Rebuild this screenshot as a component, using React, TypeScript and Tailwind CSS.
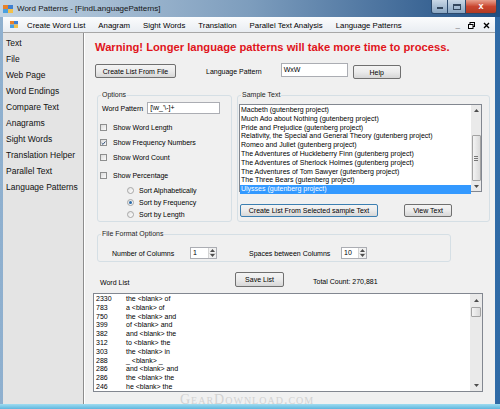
import type { ReactNode } from 'react'

const sampleTexts = [
  'Macbeth (gutenberg project)',
  'Much Ado about Nothing (gutenberg project)',
  'Pride and Prejudice (gutenberg project)',
  'Relativity, the Special and General Theory (gutenberg project)',
  'Romeo and Juliet (gutenberg project)',
  'The Adventures of Huckleberry Finn (gutenberg project)',
  'The Adventures of Sherlock Holmes (gutenberg project)',
  'The Adventures of Tom Sawyer (gutenberg project)',
  'The Three Bears (gutenberg project)',
  'Ulysses (gutenberg project)',
]

const words: [string, string][] = [
  ['2330', 'the <blank> of'],
  ['783', 'a <blank> of'],
  ['750', 'the <blank> and'],
  ['399', 'of <blank> and'],
  ['382', 'and <blank> the'],
  ['312', 'to <blank> the'],
  ['303', 'the <blank> in'],
  ['288', '_ <blank> _'],
  ['286', 'and <blank> and'],
  ['286', 'the <blank> the'],
  ['246', 'he <blank> the'],
]

const sideItems = [
  'Text',
  'File',
  'Web Page',
  'Word Endings',
  'Compare Text',
  'Anagrams',
  'Sight Words',
  'Translation Helper',
  'Parallel Text',
  'Language Patterns',
]

const menuItems = ['Create Word List', 'Anagram', 'Sight Words', 'Translation', 'Parallel Text Analysis', 'Language Patterns']

function Btn({ children, className = '' }: { children: ReactNode; className?: string }) {
  return (
    <div
      className={
        'flex items-center justify-center rounded-[2px] border bg-gradient-to-b from-[#f4f4f4] via-[#ebebeb] to-[#d7d7d7] text-[7px] leading-none text-black ' +
        className
      }
    >
      {children}
    </div>
  )
}

function Check({ label, checked = false }: { label: string; checked?: boolean }) {
  return (
    <div className="flex h-[15px] items-center">
      <div className="ml-[2px] flex h-[7px] w-[7px] items-center justify-center border border-[#8e8f8f] bg-gradient-to-br from-[#dcdcdc] to-[#fbfbfb]">
        {checked && (
          <svg width="6" height="6" viewBox="0 0 6 6">
            <path d="M0.8 3.1 L2.4 4.7 L5.3 1.2" stroke="#1d3f6e" strokeWidth="1.1" fill="none" />
          </svg>
        )}
      </div>
      <span className="ml-[6px] text-[7px] leading-none">{label}</span>
    </div>
  )
}

function Radio({ label, checked = false }: { label: string; checked?: boolean }) {
  return (
    <div className="flex h-[12px] items-center pl-[29px]">
      <div className="flex h-[7px] w-[7px] items-center justify-center rounded-full border border-[#a6a6a6] bg-gradient-to-br from-[#e2e2e2] to-[#ffffff]">
        {checked && <div className="h-[3px] w-[3px] rounded-full bg-[#2a6aa8]" />}
      </div>
      <span className="ml-[5px] text-[7px] leading-none">{label}</span>
    </div>
  )
}

function Arrow({ up }: { up?: boolean }) {
  return (
    <svg width="5" height="3" viewBox="0 0 5 3">
      <path d={up ? 'M0 3 L2.5 0 L5 3 Z' : 'M0 0 L2.5 3 L5 0 Z'} fill="#4d4d4d" />
    </svg>
  )
}

function Spinner({ value, className = '' }: { value: string; className?: string }) {
  return (
    <div className={'flex h-[12px] border border-[#abadb3] bg-white ' + className}>
      <span className="flex-1 pl-[2px] text-[7px] leading-[10px]">{value}</span>
      <div className="flex w-[8px] flex-col border-l border-[#d5d5d5] bg-[#f1f1f1]">
        <div className="flex flex-1 items-center justify-center border-b border-[#d5d5d5]">
          <Arrow up />
        </div>
        <div className="flex flex-1 items-center justify-center">
          <Arrow />
        </div>
      </div>
    </div>
  )
}

function Legend({ children }: { children: ReactNode }) {
  return <legend className="ml-[3px] px-[1px] text-[7px] leading-[10px] text-[#1e1e1e]">{children}</legend>
}

export default function App() {
  return (
    <div className="relative flex h-[409px] w-[500px] flex-col overflow-hidden bg-gradient-to-r from-[#8fb0cf] to-[#2f6aa6] font-['Liberation_Sans',Arial,sans-serif] text-black">
      {/* title bar */}
      <div className="flex h-[17px] items-center bg-gradient-to-r from-[#c2d3e2] via-[#7d9dbd] to-[#1f4f84]">
        <svg width="10" height="10" viewBox="0 0 10 10" className="ml-[3px]">
          <rect x="0" y="1" width="5" height="4" fill="#e8822a" />
          <rect x="5" y="1" width="5" height="4" fill="#3f7fd0" />
          <rect x="0" y="5" width="5" height="4" fill="#4aa0e0" />
          <rect x="5" y="5" width="5" height="4" fill="#f2c14b" />
        </svg>
        <span className="ml-[4px] text-[8px] leading-none text-[#141414]">Word Patterns - [FindLanguagePatterns]</span>
        <div className="ml-auto mr-[3px] flex h-[14px] self-start overflow-hidden rounded-b-[3px] border border-t-0 border-[#2c4a6d]">
          <div className="flex w-[16px] items-center justify-center border-r border-[#2c4a6d] bg-gradient-to-b from-[#c9d8e7] to-[#8aa6c2]">
            <div className="mt-[3px] h-[2px] w-[6px] border border-[#33475e] bg-white" />
          </div>
          <div className="flex w-[18px] items-center justify-center border-r border-[#2c4a6d] bg-gradient-to-b from-[#c9d8e7] to-[#8aa6c2]">
            <div className="h-[6px] w-[8px] border border-[#33475e] border-t-2 bg-transparent" />
          </div>
          <div className="flex w-[30px] items-center justify-center bg-gradient-to-b from-[#e7a08f] via-[#c9452f] to-[#b23a22]">
            <span className="text-[9px] font-bold leading-none text-white">x</span>
          </div>
        </div>
      </div>

      <div className="flex flex-1">
        <div className="w-[3px]" />
        <div className="flex w-[492px] flex-col">
          {/* menu bar */}
          <div className="flex h-[16px] items-center border-b border-[#a7a7a7] bg-gradient-to-b from-[#fbfcfd] to-[#e9edf2] text-[7.8px] leading-none">
            <svg width="8" height="7" viewBox="0 0 8 7" className="ml-[7px]">
              <rect x="0" y="0" width="4" height="3.5" fill="#e8822a" />
              <rect x="4" y="0" width="4" height="3.5" fill="#3f7fd0" />
              <rect x="0" y="3.5" width="4" height="3.5" fill="#4aa0e0" />
              <rect x="4" y="3.5" width="4" height="3.5" fill="#f2c14b" />
            </svg>
            <div className="ml-[9px] flex gap-[13px] pt-[2px]">
              {menuItems.map((m) => (
                <span key={m}>{m}</span>
              ))}
            </div>
            <div className="ml-auto mr-[5px] flex items-center gap-[8px] pt-[2px] text-[8px] font-bold">
              <span className="leading-none">_</span>
              <svg width="7" height="7" viewBox="0 0 7 7">
                <rect x="2" y="0.5" width="4.5" height="4" fill="none" stroke="#000" strokeWidth="1" />
                <rect x="0.5" y="2.5" width="4.5" height="4" fill="#fbfcfd" stroke="#000" strokeWidth="1" />
              </svg>
              <svg width="7" height="7" viewBox="0 0 7 7">
                <path d="M1 1 L6 6 M6 1 L1 6" stroke="#000" strokeWidth="1.4" />
              </svg>
            </div>
          </div>

          <div className="flex flex-1">
            {/* sidebar */}
            <div className="w-[81px] border-r border-[#8d8d8d] bg-[#e4e4e4] pt-[2px] text-[8.5px] leading-[16px] text-[#111]">
              {sideItems.map((s) => (
                <div key={s} className="pl-[3px]">
                  {s}
                </div>
              ))}
            </div>

            {/* main panel */}
            <div className="flex flex-1 flex-col border-l border-[#ffffff] bg-[#f0f0f0]">
              <div className="ml-[10px] mt-[8px] text-[11.2px] font-bold leading-[12px] text-[#e0141b]">
                Warning! Longer language patterns will take more time to process.
              </div>

              <div className="mt-[10px] flex items-start">
                <Btn className="ml-[10px] mt-[1px] h-[14px] w-[81px] border-[#707070]">Create List From File</Btn>
                <span className="ml-[30px] mt-[5px] text-[7px] leading-none">Language Pattern</span>
                <div className="ml-[19px] h-[14px] w-[67px] border border-[#abadb3] bg-white pl-[2px] text-[7px] leading-[12px]">WxW</div>
                <Btn className="ml-[5px] mt-[2px] h-[14px] w-[48px] border-[#707070]">Help</Btn>
              </div>

              <div className="mt-[11px] flex">
                <fieldset className="ml-[12px] h-[132px] w-[135px] rounded-[3px] border border-[#d5dfe5]">
                  <Legend>Options</Legend>
                  <div className="mt-[2px] flex h-[12px] items-center">
                    <span className="ml-[4px] text-[7px] leading-none">Word Pattern</span>
                    <div className="ml-[4px] h-[12px] w-[73px] border border-[#abadb3] bg-white pl-[2px] text-[7px] leading-[10px]">
                      {'[\\w_\'\\-]+'}
                    </div>
                  </div>
                  <div className="mt-[6px]">
                    <Check label="Show Word Length" />
                    <Check label="Show Frequency Numbers" checked />
                    <Check label="Show Word Count" />
                    <div className="mt-[3px]">
                      <Check label="Show Percentage" />
                    </div>
                    <div className="mt-[1px]">
                      <Radio label="Sort Alphabetically" />
                      <Radio label="Sort by Frequency" checked />
                      <Radio label="Sort by Length" />
                    </div>
                  </div>
                </fieldset>

                <fieldset className="ml-[5px] h-[132px] w-[253px] rounded-[3px] border border-[#d5dfe5]">
                  <Legend>Sample Text</Legend>
                  <div className="ml-[1px] mt-[4px] flex h-[88px] w-[243px] border border-[#828790] bg-white">
                    <div className="flex-1 pt-[1px] text-[7px] leading-[8.8px]">
                      {sampleTexts.map((t, i) =>
                        i === sampleTexts.length - 1 ? (
                          <div key={t} className="bg-[#3399ff] pl-[1px] text-white">
                            {t}
                          </div>
                        ) : (
                          <div key={t} className="pl-[1px]">
                            {t}
                          </div>
                        ),
                      )}
                    </div>
                    <div className="flex w-[10px] flex-col items-center bg-[#eaeaea]">
                      <div className="flex h-[10px] items-center">
                        <Arrow up />
                      </div>
                      <div className="mt-[20px] flex h-[46px] w-[9px] flex-col items-center justify-center gap-[1px] rounded-[1px] border border-[#a3a3a3] bg-gradient-to-r from-[#f4f4f4] to-[#dadada]">
                        <div className="h-px w-[4px] bg-[#777]" />
                        <div className="h-px w-[4px] bg-[#777]" />
                        <div className="h-px w-[4px] bg-[#777]" />
                      </div>
                      <div className="mt-auto flex h-[10px] items-center">
                        <Arrow />
                      </div>
                    </div>
                  </div>
                  <div className="mt-[12px] flex">
                    <Btn className="ml-[2px] h-[13px] w-[138px] border-[#3c7fb1] from-[#eaf6fd] via-[#d9f0fc] to-[#bee6fd]">
                      Create List From Selected sample Text
                    </Btn>
                    <Btn className="ml-[26px] h-[13px] w-[48px] border-[#707070]">View Text</Btn>
                  </div>
                </fieldset>
              </div>

              <fieldset className="ml-[12px] mt-[7px] h-[33px] w-[354px] rounded-[3px] border border-[#d5dfe5]">
                <Legend>File Format Options</Legend>
                <div className="mt-[8px] flex h-[12px] items-center">
                  <span className="ml-[14px] w-[78px] text-[7px] leading-none">Number of Columns</span>
                  <Spinner value="1" className="w-[27px]" />
                  <span className="ml-[32px] w-[92px] text-[7px] leading-none">Spaces between Columns</span>
                  <Spinner value="10" className="w-[26px]" />
                </div>
              </fieldset>

              <div className="mt-[10px] flex items-start">
                <span className="ml-[15px] mt-[7px] w-[135px] text-[7px] leading-none">Word List</span>
                <Btn className="h-[15px] w-[49px] border-[#707070]">Save List</Btn>
                <span className="ml-[29px] mt-[6px] text-[7px] leading-none">Total Count: 270,881</span>
              </div>

              <div className="ml-[8px] mt-[6px] flex h-[99px] w-[390px] border border-[#828790] bg-white">
                <div className="flex-1 pl-[2px] pt-[1px] text-[7px] leading-[8.8px]">
                  {words.map(([n, w], i) => (
                    <div key={i} className="flex">
                      <span className="w-[30px]">{n}</span>
                      <span>{w}</span>
                    </div>
                  ))}
                </div>
                <div className="flex w-[12px] flex-col items-center bg-[#eaeaea]">
                  <div className="flex h-[12px] items-center">
                    <Arrow up />
                  </div>
                  <div className="mt-[1px] h-[10px] w-[10px] rounded-[1px] border border-[#a3a3a3] bg-gradient-to-r from-[#f4f4f4] to-[#dadada]" />
                  <div className="mt-auto flex h-[12px] items-center">
                    <Arrow />
                  </div>
                </div>
              </div>
            </div>
          </div>
        </div>
        <div className="w-[5px]" />
      </div>
      <div className="h-[5px] bg-gradient-to-b from-[#9fdcf0] to-[#5fb6de]" />

      {/* watermark */}
      <div className="pointer-events-none absolute bottom-[2px] left-[180px] font-['Liberation_Serif',serif] text-[14px] leading-none tracking-[1px] text-[#d2d2d2] [font-variant:small-caps]">
        GearDownload.com
      </div>
    </div>
  )
}
